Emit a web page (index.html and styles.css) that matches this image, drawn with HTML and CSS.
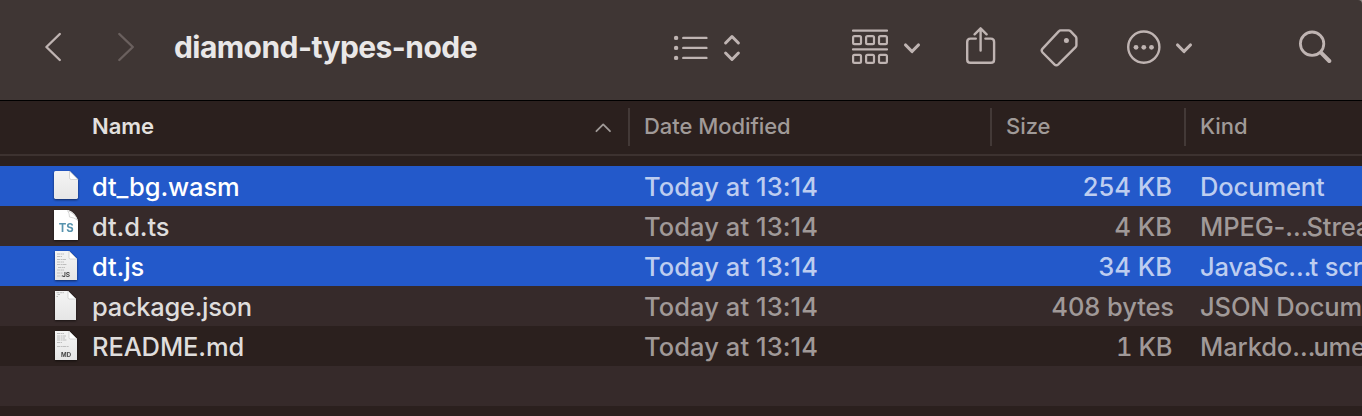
FILE: index.html
```html
<!DOCTYPE html>
<html lang="en">
<head>
<meta charset="utf-8">
<title>diamond-types-node</title>
<link rel="stylesheet" href="styles.css">
</head>
<body>
<div class="window">
  <header class="toolbar">
    <svg class="icon back" width="18" height="40" viewBox="44 27 18 40"><path d="M59.8 34 L46.4 47 L59.8 60"/></svg>
    <svg class="icon forward" width="18" height="40" viewBox="117 27 18 40"><path d="M119.3 34 L132.8 47 L119.3 60"/></svg>
    <h1 class="title">diamond-types-node</h1>
    <svg class="icon list" width="36" height="40" viewBox="673 27 36 40"><path d="M683.3 37.9H706.4M683.3 47.9H706.4M683.3 57.9H706.4"/><g class="solid"><circle cx="676.1" cy="37.9" r="2.2"/><circle cx="676.1" cy="47.9" r="2.2"/><circle cx="676.1" cy="57.9" r="2.2"/></g></svg>
    <svg class="icon sorter" width="18" height="40" viewBox="723 27 18 40"><path d="M725.6 43L732 36.5L738.4 43M725.6 53L732 59.5L738.4 53"/></svg>
    <svg class="icon group" width="38" height="40" viewBox="851 27 38 40"><path d="M853 30.7H887M853 49.4H887"/><rect x="853.1" y="36.2" width="7.9" height="7.9" rx="1.4"/><rect x="866.1" y="36.2" width="7.9" height="7.9" rx="1.4"/><rect x="879" y="36.2" width="7.9" height="7.9" rx="1.4"/><rect x="853.1" y="54.9" width="7.9" height="7.9" rx="1.4"/><rect x="866.1" y="54.9" width="7.9" height="7.9" rx="1.4"/><rect x="879" y="54.9" width="7.9" height="7.9" rx="1.4"/></svg>
    <svg class="icon caret" width="18" height="40" viewBox="903 27 18 40"><path d="M905.6 45L912 51.5L918.4 45"/></svg>
    <svg class="icon share" width="31" height="40" viewBox="965 27 31 40"><path d="M975.8 38.6H970.5Q967.2 38.6 967.2 42V59.4Q967.2 62.8 970.5 62.8H990.8Q994.1 62.8 994.1 59.4V42Q994.1 38.6 990.8 38.6H985.4M980.6 50.5V28.6M974.6 34.3L980.6 28.3L986.6 34.3"/></svg>
    <svg class="icon tag" width="39" height="40" viewBox="1040 27 39 40"><path d="M1060.6 30.4H1068.6Q1069.7 30.4 1070.5 31.2L1075.5 36.4Q1076.4 37.3 1076.4 38.5V45.2Q1076.4 46.3 1075.6 47.1L1058.3 64.3Q1056.3 66.2 1054.4 64.3L1042.6 52.5Q1040.8 50.6 1042.6 48.7L1058.7 31.4Q1059.5 30.4 1060.6 30.4Z"/><circle class="solid" cx="1066.4" cy="40.4" r="2.5"/></svg>
    <svg class="icon more" width="34" height="40" viewBox="1127 27 34 40"><circle cx="1143.8" cy="47.1" r="15.6"/><g class="solid"><circle cx="1136" cy="47.3" r="2.4"/><circle cx="1143.8" cy="47.3" r="2.4"/><circle cx="1151.5" cy="47.3" r="2.4"/></g></svg>
    <svg class="icon caret" width="18" height="40" viewBox="1175 27 18 40"><path d="M1177.6 45L1184 51.5L1190.4 45"/></svg>
    <svg class="icon search" width="34" height="40" viewBox="1298 27 34 40"><circle cx="1312.1" cy="43.7" r="11.7"/><path class="handle" d="M1321 52.6L1329.3 61"/></svg>
  </header>

  <div class="columns head">
    <div class="cell name"><span>Name</span><svg class="arrow" width="18" height="14" viewBox="0 0 18 14"><path d="M2.4 12.2L9.2 5.4L16 12.2"/></svg></div>
    <div class="cell date"><span>Date Modified</span></div>
    <div class="cell size"><span>Size</span></div>
    <div class="cell kind"><span>Kind</span></div>
  </div>

  <main class="files">
    <div class="columns row selected">
      <div class="cell name"><svg class="file" width="28" height="34" viewBox="0 0 28 34"><defs><linearGradient id="sheet" x1="0" y1="0" x2="0" y2="1"><stop offset="0" stop-color="#f4f4f4"/><stop offset="1" stop-color="#e6e6e6"/></linearGradient></defs><path class="paper" d="M3.5 1H17.5L26 9.5V27.6Q26 29 24.6 29H3.4Q2 29 2 27.6V2.5Q2 1 3.5 1Z"/><path class="fold" d="M17.5 1V7.8Q17.5 9.5 19.2 9.5H26Z"/></svg><span>dt_bg.wasm</span></div>
      <div class="cell date"><span>Today at 13:14</span></div>
      <div class="cell size"><span>254 KB</span></div>
      <div class="cell kind"><span>Document</span></div>
    </div>
    <div class="columns row odd">
      <div class="cell name"><svg class="file" width="28" height="34" viewBox="0 0 28 34"><path class="paper white" d="M2 0H16.5Q24 3 26 11V30H2Z"/><path class="fold" d="M15.5 .6Q17.5 3 17.5 7Q22 7.5 25.5 10Q23 3.5 15.5 .6Z"/><text class="ts" x="14.2" y="21.8" textLength="15" lengthAdjust="spacingAndGlyphs">TS</text></svg><span>dt.d.ts</span></div>
      <div class="cell date"><span>Today at 13:14</span></div>
      <div class="cell size"><span>4 KB</span></div>
      <div class="cell kind"><span>MPEG-<i>…</i>Stream</span></div>
    </div>
    <div class="columns row selected">
      <div class="cell name"><svg class="file" width="28" height="34" viewBox="0 0 28 34"><path class="paper" d="M3 1H17L25 9V30H3Z"/><path class="lines" d="M5 4H12M5 6.5H10M5 9.5H14M5 12H12M5 14.5H15M6 17.5H13M5 20H12M5 23H11M5 26H10"/><path class="fold" d="M17 1V7.5Q17 9 18.5 9H25Z"/><text class="label" x="14.1" y="27.2" textLength="8.2" lengthAdjust="spacingAndGlyphs">JS</text></svg><span>dt.js</span></div>
      <div class="cell date"><span>Today at 13:14</span></div>
      <div class="cell size"><span>34 KB</span></div>
      <div class="cell kind"><span>JavaSc<i>…</i>t script</span></div>
    </div>
    <div class="columns row odd">
      <div class="cell name"><svg class="file" width="28" height="34" viewBox="0 0 28 34"><path class="paper" d="M3 1H16L24 9V30H3Z"/><path class="lines" d="M4.5 2.7H12M5.5 4.5H8M4.5 6.5H6"/><path class="fold" d="M16 1V7.5Q16 9 17.5 9H24Z"/></svg><span class="long">package.json</span></div>
      <div class="cell date"><span>Today at 13:14</span></div>
      <div class="cell size bytes"><span>408 bytes</span></div>
      <div class="cell kind"><span>JSON Document</span></div>
    </div>
    <div class="columns row">
      <div class="cell name"><svg class="file" width="28" height="34" viewBox="0 0 28 34"><path class="paper" d="M3 1H17L25 9V30H3Z"/><path class="lines" d="M5 3.5H12M5 6H14M5 8H13M5 10H15M5 12.5H10M5 16.5H17"/><path class="fold" d="M17 1V7.5Q17 9 18.5 9H25Z"/><text class="label" x="14" y="27" textLength="10" lengthAdjust="spacingAndGlyphs">MD</text></svg><span>README.md</span></div>
      <div class="cell date"><span>Today at 13:14</span></div>
      <div class="cell size single"><span>1 KB</span></div>
      <div class="cell kind"><span>Markdo<i>…</i>ument</span></div>
    </div>
    <div class="row odd"></div>
  </main>
</div>
</body>
</html>
```

FILE: styles.css
```css
* { box-sizing: border-box; }

body {
  margin: 0;
  background: #8d8985;
  font-family: Inter, "Liberation Sans", sans-serif;
}

.window {
  width: 1362px;
  height: 416px;
  overflow: hidden;
  background: linear-gradient(#3f3634 0 100px, #2b201e 100px);
  border-top-right-radius: 4px;
}

.toolbar {
  display: flex;
  align-items: center;
  height: 101px;
  padding: 0 0 6px 44px;
  border-bottom: 1px solid #000;
}

.icon {
  flex: none;
  fill: none;
  stroke: #bfb4b2;
  stroke-width: 2.4;
  stroke-linecap: round;
  stroke-linejoin: round;
}

.solid { fill: #bfb4b2; stroke: none; }
.forward { margin-left: 55px; stroke: #6a605e; }

.title {
  flex: none;
  width: 499px;
  margin: 0 0 0 39px;
  font-size: 30px;
  font-weight: 700;
  line-height: 40px;
  letter-spacing: -0.56px;
  white-space: nowrap;
  color: #e9e7e7;
}

.sorter { margin-left: 14px; stroke-width: 3; }
.group { margin-left: 110px; stroke-width: 2.2; }
.caret { margin-left: 14px; stroke-width: 3.2; }
.share { margin-left: 44px; }
.tag { margin-left: 44px; }
.more { margin-left: 48px; }
.search { margin-left: 105px; stroke-width: 2.8; }
.handle { stroke-width: 4; }

.columns {
  display: grid;
  grid-template-columns: 628px 362px 194px 178px;
}

.cell {
  display: flex;
  align-items: center;
  min-width: 0;
  overflow: hidden;
  white-space: nowrap;
}

.head {
  height: 55px;
  padding: 7px 0 8px;
  border-bottom: 2px solid #3d3230;
  font-size: 22px;
  font-weight: 500;
  line-height: 36px;
  letter-spacing: -0.06px;
  color: #a09a98;
}

.head .cell { padding-bottom: 2px; }
.head .cell + .cell { padding-left: 14px; border-left: 2px solid #433937; }
.head .name { justify-content: space-between; padding: 0 16px 2px 92px; font-weight: 600; color: #e3e0df; }

.arrow { fill: none; stroke: #a09a98; stroke-width: 1.8; stroke-linecap: round; stroke-linejoin: round; }

.files { padding-top: 10px; }

.row {
  height: 40px;
  font-size: 25.5px;
  font-weight: 450;
  line-height: 40px;
  letter-spacing: -0.12px;
  color: #a09998;
}

.odd { background: #362a2a; }
.selected { background: #2359ca; color: #bdcdf0; }
.row .cell { padding-top: 2px; }
.row .name { padding-left: 52px; color: #dfdddc; }
.selected .name { color: #fff; }
.row .date, .row .kind { padding-left: 16px; }
.row .date { letter-spacing: 0.08px; }
.row .size { justify-content: flex-end; padding-right: 12px; letter-spacing: 0; }
.row .bytes { padding-right: 10px; letter-spacing: -0.1px; }
.row .single { font-variant-numeric: tabular-nums; letter-spacing: -0.4px; }
.long { letter-spacing: -0.3px; }
.kind i { font-style: normal; letter-spacing: -2px; }

.file {
  flex: none;
  width: 28px;
  height: 34px;
  margin-right: 12px;
  filter: drop-shadow(0 1px 1px rgba(0, 0, 0, .55));
}

.paper { fill: url(#sheet); }
.white { fill: #fff; }
.fold { fill: #fff; stroke: #c5c5c5; stroke-width: .7; }
.lines { fill: none; stroke: #bebebe; stroke-width: 1; stroke-dasharray: 3 .6 2 .4; }
.ts { fill: #5793ae; font-size: 12px; font-weight: 700; letter-spacing: 0; text-anchor: middle; }
.label { fill: #444; font-size: 6.5px; font-weight: 700; letter-spacing: 0; text-anchor: middle; }
```
